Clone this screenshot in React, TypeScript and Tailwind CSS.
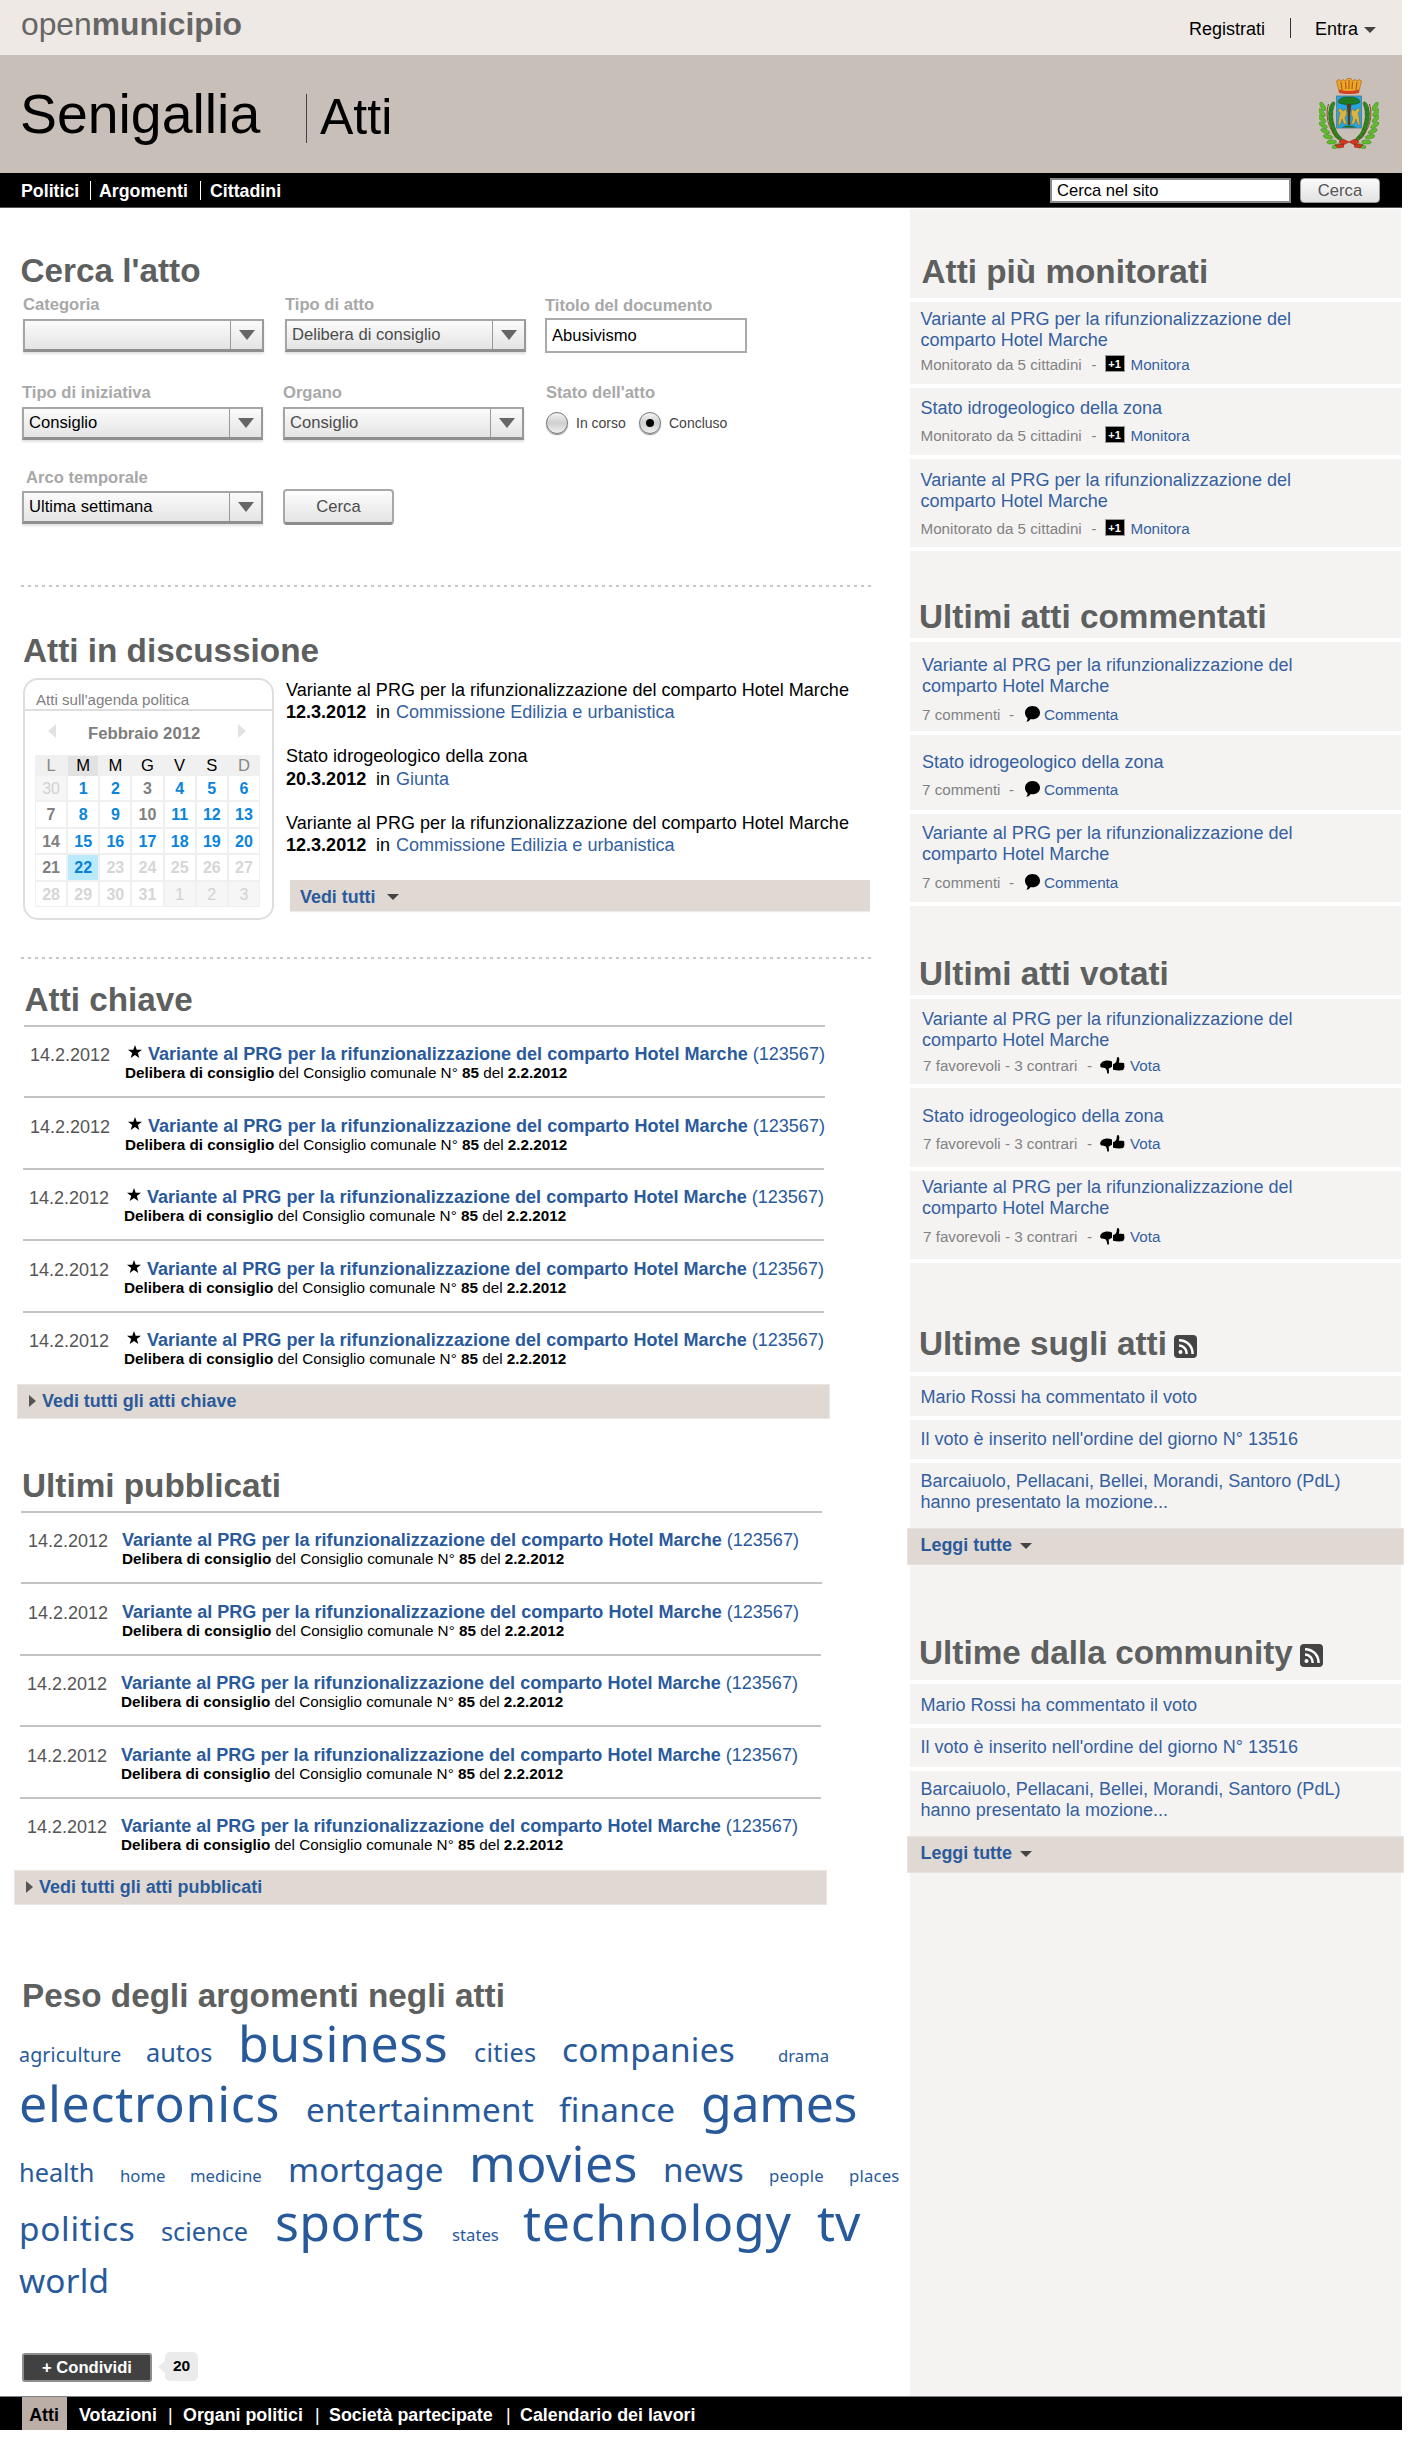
import React from "react";

type Act = { title: string[]; box: string; meta: string };

function Down({ className = "" }: { className?: string }) {
  return (
    <svg className={className} width="12" height="6" viewBox="0 0 12 6" fill="#444">
      <path d="M0 0h12L6 6z" />
    </svg>
  );
}

function Heading({ className = "", children }: { className?: string; children: React.ReactNode }) {
  return (
    <h2 className={`text-[33.3px] leading-[37px] font-bold text-[#5e5f5f] whitespace-nowrap ${className}`}>{children}</h2>
  );
}

/* ---------- header ---------- */

function Crest() {
  const stem = [
    [21, 64, 10], [17, 61, 25], [14, 57, 40], [11.5, 52.5, 52], [9.5, 47.5, 62], [8.2, 42, 72], [7.8, 36.5, 80], [8.500, 31, 88],
  ];
  const side = (
    <g>
      {stem.map(([x, y, a], i) => (
        <g key={i} transform={`translate(${x} ${y}) rotate(${a})`}>
          <ellipse cx="-4.500" cy="2.800" rx="4.800" ry="2" transform="rotate(-28)" fill="#5fbd2a" stroke="#2f7318" strokeWidth=".4" />
          <ellipse cx="-4.500" cy="-2.800" rx="4.800" ry="2" transform="rotate(28)" fill="#2f8a1e" stroke="#1f5a12" strokeWidth=".4" />
        </g>
      ))}
      <path d="M9.500 26C5.500 40 10 56 26 66" fill="none" stroke="#8f4524" strokeWidth="1" />
    </g>
  );
  return (
    <svg width="60" height="72" viewBox="0 0 60 72">
      {side}
      <g transform="translate(60 0) scale(-1 1)">{side}</g>
      <path d="M17.500 3l2.500-1.500L22 3l2-1.500L26.500 3 28 .5h4L33.500 3 36 1.500 38 3l2-1.500L42.500 3l-3 12h-19z" fill="#eaa829" stroke="#b4641a" strokeWidth=".7" />
      <path d="M22 4l1 8M26.500 4l.5 7M30 2v9M33.500 4l-.5 7M38 4l-1 8" stroke="#b8501c" strokeWidth="1.100" />
      <path d="M20 11.500q10 3 20 0v3q-10 3-20 0z" fill="#d4401f" />
      <rect x="17.500" y="18" width="25" height="32" fill="#24a5e6" stroke="#5e7480" strokeWidth=".8" />
      <path d="M19 24q1-5 11-5t11 5q-2 2.500-11 2.500T19 24z" fill="#1f7a24" stroke="#13531a" strokeWidth=".6" />
      <path d="M27.500 26h5L31.200 35v12h-2.400V35z" fill="#5b3a17" />
      <path d="M21 30l3 3 3-2 1 5-2 4 2 6h-3l-2-5-2 6h-2l1-8 1-4-2-3zM39 30l-3 3-3-2-1 5 2 4-2 6h3l2-5 2 6h2l-1-8-1-4 2-3z" fill="#d9b441" stroke="#7c6220" strokeWidth=".5" />
      <path d="M22 49.500q8-4 16 0z" fill="#1c6a22" />
      <path d="M30 64l-6-3-4 3 4 3zM30 64l6-3 4 3-4 3zM25 66l-9 1 3 3 6-1M35 66l9 1-3 3-6-1" fill="#d8351f" stroke="#8c2415" strokeWidth=".6" />
    </svg>
  );
}

function Header() {
  return (
    <header className="w-[1402px] text-black">
      <div className="flex h-[55px] bg-[#eee9e4]">
        <div className="ml-[21px] mt-[6px] text-[31.8px] leading-[36px] text-[#666] whitespace-nowrap">
          open<b>municipio</b>
        </div>
        <nav className="ml-auto mr-[26px] flex text-[18px] leading-[20px] pt-[19px] h-[45px]">
          <span className="w-[101px]">Registrati</span>
          <span className="h-[20px] w-px -mt-px bg-[#333] mr-[24px]" />
          <span className="w-[49px]">Entra</span>
          <Down className="mt-[8px]" />
        </nav>
      </div>
      <div className="flex h-[118px] bg-[#c8bfb9]">
        <h1 className="ml-[20px] mt-[28px] w-[286px] text-[55.4px] leading-[62px]">Senigallia</h1>
        <span className="mt-[39px] h-[49px] w-px bg-[#444]" />
        <span className="ml-[13px] mt-[34px] text-[50px] leading-[56px]">Atti</span>
        <div className="ml-auto mr-[23px] mt-[23px]">
          <Crest />
        </div>
      </div>
      <div className="flex h-[35px] items-start bg-black pt-[5px] border-b border-[#555]">
        <nav className="ml-[21px] mt-[3px] flex text-[17.8px] leading-[20px] font-bold text-white">
          <span className="w-[69px]">Politici</span>
          <span className="h-[19px] w-px bg-white mr-[8px]" />
          <span className="w-[101px]">Argomenti</span>
          <span className="h-[19px] w-px bg-white mr-[9px]" />
          <span>Cittadini</span>
        </nav>
        <div className="ml-auto h-[25px] w-[241px] border-2 border-[#8a8a8a] bg-white pl-[5px] text-[16.6px] leading-[21px]">
          Cerca nel sito
        </div>
        <button className="ml-[9px] mr-[22px] h-[25px] w-[80px] rounded-[4px] border border-[#999] bg-linear-to-b from-[#fafafa] to-[#e2e2e2] text-[16.6px] leading-[22px] text-[#555]">
          Cerca
        </button>
      </div>
    </header>
  );
}

/* ---------- search form ---------- */

function Select({ value, dark = false }: { value: string; dark?: boolean }) {
  return (
    <div
      className={`flex h-[33px] w-[241px] border-2 border-b-[3px] border-[#a6a6a6] border-b-[#8f8f8f] border-r-[#999] bg-linear-to-b from-[#fbfbfb] to-[#e4e4e4] shadow-[0_2px_2px_rgba(0,0,0,0.12)] text-[16.6px] leading-[27px] whitespace-nowrap ${dark ? "text-black" : "text-[#4c4c4c]"}`}
    >
      <span className="w-[205px] pl-[5px]">{value}</span>
      <span className="flex w-[32px] items-center justify-center border-l border-[#999]">
        <svg width="16" height="10" viewBox="0 0 16 10" fill="#666">
          <path d="M0 0h16L8 10z" />
        </svg>
      </span>
    </div>
  );
}

function Label({ children, className = "" }: { children: React.ReactNode; className?: string }) {
  return (
    <div className={`text-[16.600px] leading-[18px] font-bold text-[#a8a8a8] whitespace-nowrap ${className}`}>{children}</div>
  );
}

function Radio({ on = false }: { on?: boolean }) {
  return (
    <span className="flex size-[22px] items-center justify-center rounded-full border border-[#777] bg-linear-to-b from-[#f4f4f4] via-[#cfcfcf] to-[#f0f0f0] shadow-[0_1px_1px_#888]">
      {on && <span className="size-[8px] rounded-full bg-black" />}
    </span>
  );
}

function SearchForm() {
  return (
    <section className="h-[378px] pt-[45px]">
      <Heading className="ml-[20.500px]">Cerca l'atto</Heading>
      <div className="mt-[7px] flex h-[88px] pl-[23px]">
        <div className="w-[262px]">
          <Label>Categoria</Label>
          <div className="mt-[5px]"><Select value="" /></div>
        </div>
        <div className="w-[260px]">
          <Label>Tipo di atto</Label>
          <div className="mt-[5px]"><Select value="Delibera di consiglio" /></div>
        </div>
        <div>
          <Label className="relative top-px">Titolo del documento</Label>
          <div className="mt-[4px] h-[35px] w-[202px] border-2 border-[#aaa] pl-[5px] text-[16.6px] leading-[31px] text-black">Abusivismo</div>
        </div>
      </div>
      <div className="flex h-[85px] pl-[22px]">
        <div className="w-[261px]">
          <Label>Tipo di iniziativa</Label>
          <div className="mt-[5px]"><Select value="Consiglio" dark /></div>
        </div>
        <div className="w-[263px]">
          <Label>Organo</Label>
          <div className="mt-[5px]"><Select value="Consiglio" /></div>
        </div>
        <div>
          <Label>Stato dell'atto</Label>
          <div className="mt-[10px] flex items-center text-[14px] text-[#444]">
            <Radio />
            <span className="ml-[8px] w-[63px]">In corso</span>
            <Radio on />
            <span className="ml-[8px]">Concluso</span>
          </div>
        </div>
      </div>
      <div className="flex pl-[22px]">
        <div className="w-[261px]">
          <Label className="ml-[4px]">Arco temporale</Label>
          <div className="mt-[4px]"><Select value="Ultima settimana" dark /></div>
        </div>
        <button className="mt-[20px] h-[36px] w-[111px] rounded-[4px] border-2 border-b-[3px] border-[#a8a8a8] border-b-[#8c8c8c] bg-linear-to-b from-[#fdfdfd] to-[#e4e4e4] text-[16.6px] leading-[30px] text-[#4c4c4c]">
          Cerca
        </button>
      </div>
    </section>
  );
}

function Dots() {
  return (
    <div className="ml-[21px] h-[2px] w-[850px] bg-[repeating-linear-gradient(90deg,#c8c8c8_0_3px,transparent_3px_7px)]" />
  );
}

/* ---------- agenda ---------- */

const weeks = [
  "o30 b1 b2 g3 b4 b5 b6",
  "g7 b8 b9 g10 b11 b12 b13",
  "g14 b15 b16 b17 b18 b19 b20",
  "g21 t22 f23 f24 f25 f26 f27",
  "f28 f29 f30 f31 o1 o2 o3",
];

const dayStyle: Record<string, string> = {
  o: "bg-[#f6f6f6] text-[#d2d2d2]",
  b: "bg-white font-bold text-[#0a84dc]",
  g: "bg-white font-bold text-[#808080]",
  f: "bg-white font-bold text-[#d6d6d6]",
  t: "bg-[#b9eafe] font-bold text-[#0a7fd8]",
};

function Calendar() {
  const head = "LMMGVSD".split("");
  return (
    <div className="h-[242px] w-[251px] rounded-[15px] border-2 border-[#dedede]">
      <div className="h-[31px] border-b-2 border-[#dedede] pl-[11px] pt-[11px] text-[15.100px] leading-[17px] text-[#808080]">
        Atti sull'agenda politica
      </div>
      <div className="flex h-[44px] pl-[23px] pt-[13px]">
        <svg width="8" height="14" viewBox="0 0 8 14" fill="#e2e2e2"><path d="M8 0v14L0 7z" /></svg>
        <span className="ml-[32px] mt-px w-[150px] text-[16.700px] leading-[18px] font-bold text-[#7d7d7d]">Febbraio 2012</span>
        <svg width="8" height="14" viewBox="0 0 8 14" fill="#e2e2e2"><path d="M0 0v14l8-7z" /></svg>
      </div>
      <div className="ml-[10px] w-[225px] bg-[#f0f0f0] p-px text-center">
        <div className="grid h-[20px] grid-cols-7 gap-[2px] text-[16.6px] leading-[20px]">
          {head.map((d, i) => (
            <span key={i} className={`${i === 1 ? "bg-[#e2e2e2]" : ""} ${i % 6 ? "text-black" : "text-[#888]"}`}>{d}</span>
          ))}
        </div>
        <div className="grid h-[130px] grid-cols-7 grid-rows-5 gap-[2px] text-[16px] leading-[25px]">
          {weeks.join(" ").split(" ").map((c, i) => (
            <span key={i} className={dayStyle[c[0]]}>{c.slice(1)}</span>
          ))}
        </div>
      </div>
    </div>
  );
}

function Discussion() {
  const long = "Variante al PRG per la rifunzionalizzazione del comparto Hotel Marche";
  const items = [
    [long, "12.3.2012", "Commissione Edilizia e urbanistica", "h-[66px]"],
    ["Stato idrogeologico della zona", "20.3.2012", "Giunta", "h-[67px]"],
    [long, "12.3.2012", "Commissione Edilizia e urbanistica", "h-[67px]"],
  ];
  return (
    <section className="h-[372px]">
      <Dots />
      <Heading className="ml-[23px] mt-[45px]">Atti in discussione</Heading>
      <div className="mt-[9px] flex pl-[23px]">
        <Calendar />
        <div className="ml-[12px] pt-[2px]">
          {items.map(([t, d, o, h], i) => (
            <div key={i} className={`text-[18.040px] leading-[22px] text-black whitespace-nowrap ${h}`}>
              <div className="relative -top-px">{t}</div>
              <div className={i === 1 ? "flex" : "relative -top-px flex"}>
                <b className="w-[90px]">{d}</b>
                <span className="w-[20px]">in</span>
                <a className="text-[#34609f]">{o}</a>
              </div>
            </div>
          ))}
          <div className="ml-[4px] flex h-[31px] w-[580px] bg-[#e0d9d3] pl-[10px] pt-[7px] text-[17.9px] leading-[20px] font-bold text-[#2a5a9b] shadow-[0_1px_1px_#ececec]">
            Vedi tutti <Down className="ml-[11px] mt-[7px]" />
          </div>
        </div>
      </div>
    </section>
  );
}

/* ---------- act lists ---------- */

function ActList({ star = false, more, moreShift }: { star?: boolean; more: string; moreShift: string }) {
  const shifts = ["", "", "-ml-px", "-ml-px", "-ml-px"];
  const heights = ["h-[71px]", "h-[72px]", "h-[71px]", "h-[72px]", "h-[73px]"];
  const pads = ["pt-[17px]", "pt-[18px]", "pt-[17px]", "pt-[18px]", "pt-[17px]"];
  return (
    <div>
      {shifts.map((s, i) => (
        <div key={i} className={`w-[801px] border-t-2 border-[#c3c3c3] whitespace-nowrap ${heights[i]} ${pads[i]} ${s}`}>
          <div className="flex">
            <span className={`pt-px text-[18px] leading-[20px] text-[#555] ${star ? "w-[101px] pl-[6px]" : "w-[101px] pl-[7px]"}`}>14.2.2012</span>
            <div className="text-black">
              <div className="flex text-[18.060px] leading-[20px] text-[#2a5a9b]">
                {star && (
                  <svg className="ml-[3px] mr-[6px] mt-px" width="14" height="13" viewBox="0 0 14 13" fill="#000">
                    <path d="M7 0l1.700 4.800H14L9.800 7.900 11.300 13 7 9.900 2.700 13l1.500-5.100L0 4.800h5.300z" />
                  </svg>
                )}
                <b>Variante al PRG per la rifunzionalizzazione del comparto Hotel Marche</b>
                <span className="ml-[5px]">(123567)</span>
              </div>
              <div className="text-[15.270px] leading-[17px]">
                <b>Delibera di consiglio</b> del Consiglio comunale N° <b>85</b> del <b>2.2.2012</b>
              </div>
            </div>
          </div>
        </div>
      ))}
      <div className={`flex h-[35px] w-[813px] border border-[#ebe6e2] bg-[#e0d9d3] pl-[11px] pt-[6px] text-[17.96px] leading-[20px] font-bold text-[#2a5a9b] whitespace-nowrap ${moreShift}`}>
        <svg className="mr-[6px] mt-[4px]" width="7" height="12" viewBox="0 0 7 12" fill="#555"><path d="M0 0v12l7-6z" /></svg>
        {more}
      </div>
    </div>
  );
}

/* ---------- tag cloud ---------- */

const size: Record<string, string> = {
  a: "text-[16.700px]", b: "text-[19.600px] tracking-[0.150px]", c: "text-[25.300px]", d: "text-[33.300px]", e: "text-[50px]",
};

const track: Record<string, string> = {
  business: "tracking-[0.600px]",
  cities: "tracking-[0.300px]",
  companies: "tracking-[0.300px]",
  electronics: "tracking-[0.750px]",
  entertainment: "tracking-[0.120px]",
  finance: "tracking-[0.250px]",
  games: "-tracking-[0.300px]",
  movies: "tracking-[0.400px]",
  people: "tracking-[0.200px]",
  places: "tracking-[0.200px]",
  politics: "tracking-[0.750px]",
  sports: "tracking-[0.400px]",
  technology: "tracking-[0.700px]",
  world: "tracking-[0.200px]",
};

const tagLines: { height: string; words: [string, string, number][] }[] = [
  { height: "h-[60px]", words: [["agriculture", "b", 127], ["autos", "c", 92], ["business", "e", 236], ["cities", "c", 88], ["companies", "d", 216], ["drama", "a", 60]] },
  { height: "h-[60px]", words: [["electronics", "e", 287], ["entertainment", "d", 253], ["finance", "d", 142], ["games", "e", 160]] },
  { height: "h-[59px]", words: [["health", "c", 101], ["home", "a", 70], ["medicine", "a", 98], ["mortgage", "d", 181], ["movies", "e", 194], ["news", "d", 106], ["people", "a", 80], ["places", "a", 60]] },
  { height: "h-[58px]", words: [["politics", "d", 142], ["science", "c", 114], ["sports", "e", 177], ["states", "a", 71], ["technology", "e", 294], ["tv", "e", 60]] },
  { height: "h-[60px]", words: [["world", "d", 120]] },
];

function Tags() {
  return (
    <section className="h-[376px]">
      <Heading className="ml-[22px]">Peso degli argomenti negli atti</Heading>
      <div className="-mt-px pl-[19px] font-['Noto_Sans',sans-serif] text-[#285a9b]">
        {tagLines.map((l, i) => (
          <div key={i} className={`flex items-baseline leading-[60px] whitespace-nowrap ${l.height}`}>
            {l.words.map(([w, s, width]) => (
              <a key={w} className={`shrink-0 ${size[s]} ${track[w] ?? ""}`} style={{ width }}>{w}</a>
            ))}
          </div>
        ))}
      </div>
    </section>
  );
}

function Share() {
  return (
    <div className="flex h-[43px] pl-[22px] font-bold">
      <button className="h-[29px] w-[130px] rounded-[3px] border-2 border-[#8d8d8d] bg-[#414141] text-[16.600px] leading-[25px] text-white">+ Condividi</button>
      <svg className="ml-[6px] mt-[8px]" width="7" height="12" viewBox="0 0 7 12" fill="#ebebeb"><path d="M7 0v12L0 6z" /></svg>
      <span className="-mt-px h-[29px] w-[33px] rounded-[5px] bg-[#ebebeb] text-center text-[15.500px] leading-[27px] text-black">20</span>
    </div>
  );
}

/* ---------- sidebar ---------- */

function PlusOne() {
  return (
    <span className="flex h-[17px] w-[20px] items-center justify-center border border-[#999] bg-black text-[11px] leading-[12px] font-bold text-white">+1</span>
  );
}

function Bubble() {
  return (
    <svg width="15" height="16" viewBox="0 0 15 16" fill="#000">
      <path d="M7.500 0C11.700 0 15 2.900 15 6.700s-3.300 6.600-7.500 6.600c-.7 0-1.300-.1-1.900-.2C4.800 14.600 3.300 15.700 1.300 16c.8-.9 1.300-2.200 1.200-3.900C.9 10.900 0 8.900 0 6.700 0 2.900 3.300 0 7.500 0z" />
    </svg>
  );
}

function Thumbs() {
  return (
    <svg width="25" height="17" viewBox="0 0 25 17" fill="#000">
      <path d="M12 4.500C10 3.600 7 3.200 4.500 4 2 4.600.8 6 .3 7.500c-.5 1.700.3 3 2 3l3.200.8c1 1.500 1.500 2.500 1.700 4.700.2 1 1.600 1 1.700 0 .1-1.700 0-2.800-.3-4.300L12 9.800z" />
      <path d="M13 7c1.400-.2 2.600-1.200 3.300-2.500.5-1 .4-2.700.7-3.800.2-.9 1.700-.9 2 0 .5 1.500.3 3.400-.1 5 1.700-.1 4 0 4.800.4.800.5.800 1.300.3 1.800.8.500.7 1.500.1 2 .4.700.2 1.500-.5 1.900.1.700-.3 1.300-1.300 1.500-2.500.3-6.500.2-9.300-.5z" />
    </svg>
  );
}

const variante = ["Variante al PRG per la rifunzionalizzazione del", "comparto Hotel Marche"];
const stato = ["Stato idrogeologico della zona"];

function ActPanel({
  title, pad, headH, items, info, infoWidth, icon, iconWidth, action, indent, metaIndent = "",
}: {
  title: string; pad: string; headH: string; items: Act[]; info: string; infoWidth: string;
  icon: React.ReactNode; iconWidth: string; action: string; indent: string; metaIndent?: string;
}) {
  return (
    <section className={pad}>
      <Heading className={headH}>{title}</Heading>
      {items.map((it, i) => (
        <div key={i} className={`border-t-4 border-white whitespace-nowrap ${indent} ${it.box}`}>
          <div className="text-[18.040px] leading-[21px] text-[#34609f]">
            {it.title.map((l) => <div key={l}>{l}</div>)}
          </div>
          <div className={`flex text-[15.200px] leading-[17px] text-[#828282] ${it.meta} ${metaIndent}`}>
            <span className={infoWidth}>{info}</span>
            <span className="w-[13px]">-</span>
            <span className={iconWidth}>{icon}</span>
            <a className="text-[#34609f]">{action}</a>
          </div>
        </div>
      ))}
      <div className="h-[4px] bg-white" />
    </section>
  );
}

function News({ title, pad, headH }: { title: string; pad: string; headH: string }) {
  const row = "border-t-4 border-white pl-[10.500px]";
  return (
    <section className={pad}>
      <Heading className={`ml-[9px] flex ${headH}`}>
        {title}
        <svg className="ml-[7px] mt-[10px]" width="23" height="23" viewBox="0 0 23 23">
          <rect width="23" height="23" rx="4" fill="#444" />
          <circle cx="6.500" cy="17" r="2" fill="#fff" />
          <path d="M5 10.500a8 8 0 0 1 7.700 8.500M5 5.200c8 0 13.600 6 13.600 13.800" fill="none" stroke="#fff" strokeWidth="2.400" />
        </svg>
      </Heading>
      <div className="text-[18.040px] leading-[21px] text-[#34609f] whitespace-nowrap">
        <div className={`${row} h-[44px] pt-[11px]`}>Mario Rossi ha commentato il voto</div>
        <div className={`${row} h-[43px] pt-[9px]`}>Il voto è inserito nell'ordine del giorno N° 13516</div>
        <div className={`${row} h-[69px] pt-[8px]`}>
          Barcaiuolo, Pellacani, Bellei, Morandi, Santoro (PdL)
          <br />
          hanno presentato la mozione...
        </div>
      </div>
      <div className="-mx-[3px] flex h-[37px] border border-[#e8e3df] bg-[#e0d9d3] pl-[12.500px] pt-[6px] text-[17.900px] leading-[20px] font-bold text-[#2a5a9b]">
        Leggi tutte <Down className="ml-[8px] mt-[8px]" />
      </div>
    </section>
  );
}

function Sidebar() {
  return (
    <aside className="mt-[2px] h-[2187px] w-[491px] bg-[#f4f3f2]">
      <ActPanel
        title="Atti più monitorati" pad="pt-[44px]" headH="ml-[11.500px] h-[45px]" indent="pl-[10.500px]"
        info="Monitorato da 5 cittadini" infoWidth="w-[171px]" icon={<PlusOne />} iconWidth="w-[26px] -mt-px" action="Monitora"
        items={[
          { title: variante, box: "h-[86px] pt-[7px]", meta: "mt-[5px]" },
          { title: stato, box: "h-[71px] pt-[10px]", meta: "mt-[8px]" },
          { title: variante, box: "h-[92px] pt-[11px]", meta: "mt-[8px]" },
        ]}
      />
      <ActPanel
        title="Ultimi atti commentati" pad="pt-[47px]" headH="ml-[9px] h-[40px]" indent="pl-[12px]"
        info="7 commenti" infoWidth="w-[87px]" icon={<Bubble />} iconWidth="w-[19px] ml-[3px]" action="Commenta"
        items={[
          { title: variante, box: "h-[93px] pt-[13px]", meta: "mt-[9px]" },
          { title: stato, box: "h-[79px] pt-[17px]", meta: "mt-[8px]" },
          { title: variante, box: "h-[92px] pt-[9px]", meta: "mt-[9px]" },
        ]}
      />
      <ActPanel
        title="Ultimi atti votati" pad="pt-[49px]" headH="ml-[9px] h-[40px]" indent="pl-[12px]" metaIndent="pl-[1px]"
        info="7 favorevoli - 3 contrari" infoWidth="w-[164px]" icon={<Thumbs />} iconWidth="w-[30px]" action="Vota"
        items={[
          { title: variante, box: "h-[89px] pt-[10px]", meta: "mt-[6px]" },
          { title: stato, box: "h-[83px] pt-[18px]", meta: "mt-[8px]" },
          { title: variante, box: "h-[92px] pt-[6px]", meta: "mt-[9px]" },
        ]}
      />
      <News title="Ultime sugli atti" pad="pt-[62px]" headH="h-[47px]" />
      <News title="Ultime dalla community" pad="pt-[69px]" headH="h-[46px]" />
    </aside>
  );
}

function Footer() {
  return (
    <footer className="flex h-[34px] w-[1402px] border-t border-[#7c8282] bg-black pl-[22px] text-[17.850px] leading-[20px] font-bold whitespace-nowrap text-white">
      <span className="w-[45px] bg-[#bbaea6] pr-px pt-[8px] text-center text-black">Atti</span>
      <nav className="ml-[12px] flex pt-[8px]">
        <span className="w-[89px]">Votazioni</span>
        <span className="w-[15px] font-normal">|</span>
        <span className="w-[132px]">Organi politici</span>
        <span className="w-[14px] font-normal">|</span>
        <span className="w-[177px]">Società partecipate</span>
        <span className="w-[14px] font-normal">|</span>
        <span>Calendario dei lavori</span>
      </nav>
    </footer>
  );
}

export default function App() {
  return (
    <div className="h-[2441px] w-[1422px] overflow-hidden bg-white font-['Liberation_Sans',Arial,sans-serif]">
      <Header />
      <div className="-mt-px flex h-[2189px]">
        <main className="w-[910px]">
          <SearchForm />
          <Discussion />
          <section className="h-[510px]">
            <Dots />
            <Heading className="ml-[24.500px] mt-[22px] mb-[7px]">Atti chiave</Heading>
            <div className="ml-[24px]">
              <ActList star more="Vedi tutti gli atti chiave" moreShift="-ml-[7px]" />
            </div>
          </section>
          <section className="h-[510px]">
            <Heading className="ml-[22px] mb-[7px]">Ultimi pubblicati</Heading>
            <div className="ml-[21px]">
              <ActList more="Vedi tutti gli atti pubblicati" moreShift="-ml-[7px]" />
            </div>
          </section>
          <Tags />
          <Share />
        </main>
        <Sidebar />
      </div>
      <Footer />
    </div>
  );
}
